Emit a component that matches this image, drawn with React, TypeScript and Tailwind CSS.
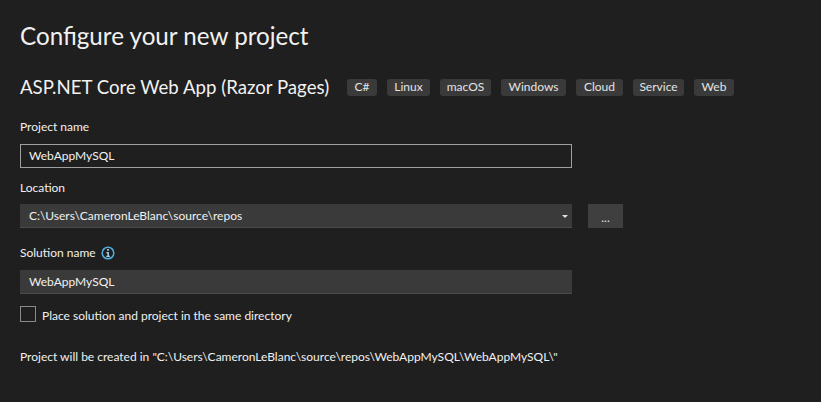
import React from 'react';

const tags = [
  { label: 'C#', width: 'w-[30px]' },
  { label: 'Linux', width: 'w-[43px]' },
  { label: 'macOS', width: 'w-[51px]' },
  { label: 'Windows', width: 'w-[65px]' },
  { label: 'Cloud', width: 'w-[47px]' },
  { label: 'Service', width: 'w-[51px]' },
  { label: 'Web', width: 'w-[40px]' },
];

export default function App() {
  return (
    <div className="h-[402px] w-[821px] overflow-hidden bg-[#1f1f1f] pl-5 font-['Lato',sans-serif] text-[#f1f1f1]">
      <h1 className="flex h-[72px] items-center text-[24.2px] leading-none">Configure your new project</h1>

      <div className="flex h-[30px] items-center">
        <h2 className="w-[327px] text-[18.65px] leading-none">ASP.NET Core Web App (Razor Pages)</h2>
        <div className="flex gap-[10px]">
          {tags.map((tag) => (
            <span
              key={tag.label}
              className={`flex h-[17px] items-center justify-center rounded-[3px] bg-[#3a3a3a] text-[12px] leading-none text-[#e4e4e4] ${tag.width}`}
            >
              {tag.label}
            </span>
          ))}
        </div>
      </div>

      <label className="mt-[15px] block h-[27px] text-[12px] leading-[20px]">Project name</label>
      <div className="flex h-6 w-[552px] items-center border border-[#a0a0a0] pl-2 text-[12px]">WebAppMySQL</div>

      <label className="mt-[10px] block h-[26px] text-[12px] leading-[20px]">Location</label>
      <div className="flex items-center">
        <div className="flex h-6 w-[552px] items-center justify-between border-b border-[#4a4a4a] bg-[#3a3a3a] pl-[9px] pr-1 text-[12px]">
          <span>C:\Users\CameronLeBlanc\source\repos</span>
          <svg width="6" height="3" viewBox="0 0 6 3" className="mt-px">
            <path d="M0 0h6L3 3z" fill="#e0e0e0" />
          </svg>
        </div>
        <button className="ml-4 flex h-6 w-[35px] items-center justify-center bg-[#3f3f3f] pt-[3px] text-[12px] leading-none text-[#e4e4e4]">...</button>
      </div>

      <div className="mt-[15px] flex h-[27px] items-start">
        <label className="text-[12px] leading-[20px]">Solution name</label>
        <svg width="14" height="14" viewBox="0 0 14 14" className="ml-[5px] mt-[3px]">
          <circle cx="7" cy="7" r="5.8" fill="none" stroke="#52b0e0" strokeWidth="1.5" />
          <rect x="6.1" y="3" width="1.8" height="1.7" fill="#a4d8f0" />
          <path d="M5.4 6h2.5v3.8h.9V11H5.4V9.8h1V7.2h-1z" fill="#a4d8f0" />
        </svg>
      </div>
      <div className="flex h-6 w-[552px] items-center border-b border-[#4a4a4a] bg-[#3a3a3a] pl-[9px] text-[12px]">WebAppMySQL</div>

      <div className="mt-3 flex h-4 items-center">
        <span className="h-4 w-4 border border-[#8a8a8a]" />
        <span className="ml-[6px] mt-[3px] text-[12px] leading-none">Place solution and project in the same directory</span>
      </div>

      <p className="mt-[25px] text-[12px] leading-[20px]">Project will be created in "C:\Users\CameronLeBlanc\source\repos\WebAppMySQL\WebAppMySQL\"</p>
    </div>
  );
}
